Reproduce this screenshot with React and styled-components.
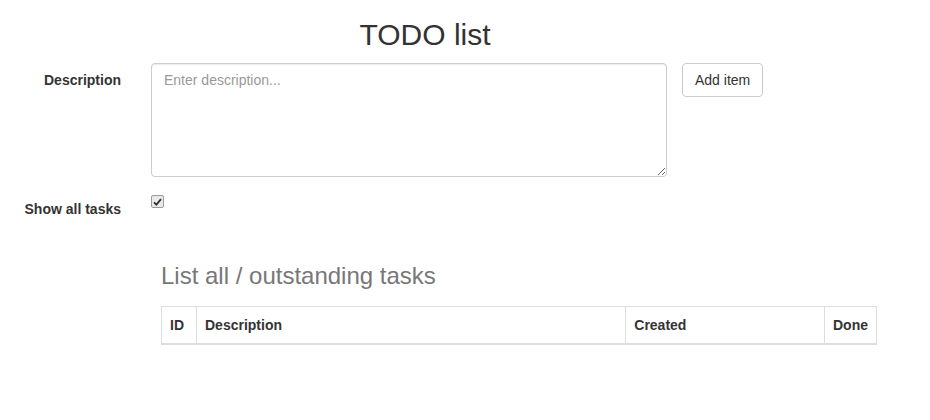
import React, { useState } from 'react'
import styled, { createGlobalStyle } from 'styled-components'

const GlobalStyle = createGlobalStyle`
  html, body {
    margin: 0;
    padding: 0;
    background: #fff;
  }
  body {
    font-family: "Liberation Sans", Arial, Helvetica, sans-serif;
    font-size: 14px;
    line-height: 20px;
    color: #333;
  }
  * {
    box-sizing: border-box;
  }
`

const Page = styled.div`
  padding-top: 18px;
  width: 930px;
`

const Title = styled.h2`
  margin: 0 0 12px;
  width: 850px;
  text-align: center;
  font-size: 30px;
  line-height: 33px;
  font-weight: 500;
  color: #333;
`

const Form = styled.form`
  display: flex;
  flex-direction: column;
  gap: 15px;
`

const FormRow = styled.div`
  display: grid;
  grid-template-columns: 121px auto;
  column-gap: 30px;
  align-items: start;
`

const Label = styled.label`
  padding-top: 7px;
  text-align: right;
  font-weight: bold;
  line-height: 20px;
  white-space: nowrap;
`

const Field = styled.div`
  display: flex;
  align-items: flex-start;
  gap: 15px;
`

const TextArea = styled.textarea`
  width: 516px;
  height: 114px;
  padding: 6px 12px;
  border: 1px solid #ccc;
  border-radius: 4px;
  font-family: inherit;
  font-size: 14px;
  line-height: 20px;
  color: #555;
  box-shadow: inset 0 1px 1px rgba(0, 0, 0, 0.075);
  resize: vertical;
  outline: none;

  &::placeholder {
    color: #999;
  }
`

const Button = styled.button`
  height: 34px;
  padding: 6px 12px;
  border: 1px solid #ccc;
  border-radius: 4px;
  background: #fff;
  font-family: inherit;
  font-size: 14px;
  line-height: 20px;
  color: #333;
  cursor: pointer;
`

const CheckWrap = styled.span`
  display: inline-flex;
  align-items: center;
  justify-content: center;
  width: 13px;
  height: 13px;
  margin-top: 3px;
  border: 1px solid #9a9a9a;
  border-radius: 2px;
  background: ${(p) => (p.$checked ? '#e9e9e9' : '#fff')};
  cursor: pointer;
`

const HiddenInput = styled.input`
  display: none;
`

const Section = styled.section`
  margin: 44px 0 0 161px;
  width: 716px;
`

const SubTitle = styled.h3`
  margin: 0 0 17px;
  font-size: 24px;
  line-height: 26px;
  font-weight: 500;
  color: #777;
`

const Table = styled.table`
  width: 100%;
  border-collapse: collapse;
  border: 1px solid #ddd;
`

const HeaderCell = styled.th`
  padding: 8px;
  border: 1px solid #ddd;
  border-bottom: 2px solid #ddd;
  text-align: left;
  font-weight: bold;
  line-height: 20px;
  width: ${(p) => p.$width || 'auto'};
`

const columns = [
  { key: 'id', label: 'ID', width: '35px' },
  { key: 'description', label: 'Description', width: '430px' },
  { key: 'created', label: 'Created', width: '199px' },
  { key: 'done', label: 'Done', width: '52px' },
]

const Checkbox = ({ checked, onChange }) => (
  <CheckWrap $checked={checked} onClick={() => onChange(!checked)}>
    <HiddenInput type="checkbox" checked={checked} readOnly />
    {checked && (
      <svg width="9" height="8" viewBox="0 0 9 8">
        <path d="M1 4.3 L3.4 6.6 L8 1.2" fill="none" stroke="#333" strokeWidth="1.8" />
      </svg>
    )}
  </CheckWrap>
)

const App = () => {
  const [showAll, setShowAll] = useState(true)

  return (
    <Page>
      <GlobalStyle />
      <Title>TODO list</Title>
      <Form onSubmit={(e) => e.preventDefault()}>
        <FormRow>
          <Label htmlFor="description">Description</Label>
          <Field>
            <TextArea id="description" placeholder="Enter description..." />
            <Button type="submit">Add item</Button>
          </Field>
        </FormRow>
        <FormRow>
          <Label>Show all tasks</Label>
          <Field>
            <Checkbox checked={showAll} onChange={setShowAll} />
          </Field>
        </FormRow>
      </Form>
      <Section>
        <SubTitle>List all / outstanding tasks</SubTitle>
        <Table>
          <thead>
            <tr>
              {columns.map((col) => (
                <HeaderCell key={col.key} $width={col.width}>
                  {col.label}
                </HeaderCell>
              ))}
            </tr>
          </thead>
          <tbody />
        </Table>
      </Section>
    </Page>
  )
}

export default App
